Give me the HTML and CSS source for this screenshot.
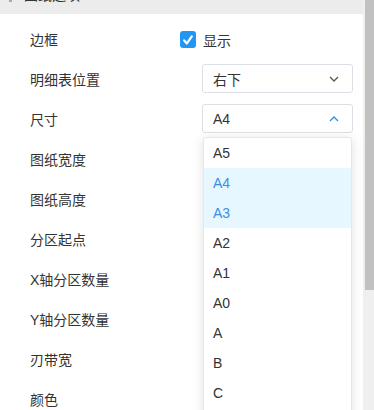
FILE: index.html
```html
<!DOCTYPE html>
<html lang="zh-CN">

<head>
    <meta charset="UTF-8">
    <meta name="viewport" content="width=device-width, initial-scale=1.0">
    <title>图纸选项</title>
    <link rel="stylesheet" href="styles.css">
</head>

<body>

    <div class="page">
        <div class="panel">
            <div class="panel-head">
                <span class="head-icon"></span>
                <span class="head-title">图纸选项</span>
            </div>

            <div class="form">
                <div class="row">
                    <div class="label">边框</div>
                    <label class="check">
                        <span class="check-box">
                            <svg width="12" height="12" viewBox="0 0 12 12">
                                <path d="M2.2 6.4 L4.9 9.4 L9.8 2.4" fill="none" stroke="#fff" stroke-width="2.2" stroke-linecap="round" stroke-linejoin="round" />
                            </svg>
                        </span>
                        显示
                    </label>
                </div>
                <div class="row">
                    <div class="label">明细表位置</div>
                    <div class="select-wrap">
                        <div class="select">
                            <span>右下</span>
                            <svg class="arrow" width="10" height="6" viewBox="0 0 10 6">
                                <path d="M1 1 L5 5 L9 1" fill="none" stroke="#555" stroke-width="1.3" />
                            </svg>
                        </div>
                    </div>
                </div>
                <div class="row">
                    <div class="label">尺寸</div>
                    <div class="select-wrap">
                        <div class="select">
                            <span>A4</span>
                            <svg class="arrow" width="10" height="6" viewBox="0 0 10 6">
                                <path d="M1 5 L5 1 L9 5" fill="none" stroke="#2d8cf0" stroke-width="1.3" />
                            </svg>
                        </div>
                        <ul class="dropdown">
                            <li>A5</li>
                            <li class="active">A4</li>
                            <li class="active">A3</li>
                            <li>A2</li>
                            <li>A1</li>
                            <li>A0</li>
                            <li>A</li>
                            <li>B</li>
                            <li>C</li>
                        </ul>
                    </div>
                </div>
                <div class="row">
                    <div class="label">图纸宽度</div>
                </div>
                <div class="row">
                    <div class="label">图纸高度</div>
                </div>
                <div class="row">
                    <div class="label">分区起点</div>
                </div>
                <div class="row">
                    <div class="label">X轴分区数量</div>
                </div>
                <div class="row">
                    <div class="label">Y轴分区数量</div>
                </div>
                <div class="row">
                    <div class="label">刃带宽</div>
                </div>
                <div class="row">
                    <div class="label">颜色</div>
                </div>
            </div>
        </div>

        <div class="scrollbar">
            <div class="thumb"></div>
        </div>
    </div>

</body>

</html>
```

FILE: styles.css
```css
* {
    margin: 0;
    padding: 0;
    box-sizing: border-box;
}

body {
    font-family: "Liberation Sans", "Noto Sans CJK SC", sans-serif;
    font-size: 14px;
    color: #333;
    background: #fff;
    overflow: hidden;
}

.page {
    display: flex;
    height: 410px;
    overflow: hidden;
}

.panel {
    width: 363px;
    flex-shrink: 0;
}

.panel-head {
    height: 14px;
    background: #ececec;
    overflow: hidden;
    display: flex;
    align-items: flex-end;
    padding-left: 9px;
}

.head-icon {
    width: 3px;
    height: 3px;
    background: #aaa;
    margin-bottom: 12px;
}

.head-title {
    margin-left: 12px;
    line-height: 20px;
    margin-bottom: 9px;
    color: #333;
}

.form {
    padding-top: 5px;
}

.row {
    display: flex;
    align-items: center;
    height: 40px;
}

.label {
    width: 180px;
    padding-left: 30px;
    flex-shrink: 0;
}

.check {
    display: flex;
    align-items: center;
    gap: 7px;
    margin-top: 1px;
}

.check-box {
    width: 16px;
    height: 17px;
    border-radius: 3px;
    background: #2196f3;
    display: flex;
    justify-content: center;
    align-items: center;
}

.select-wrap {
    position: relative;
    margin-left: 22px;
    margin-top: -1px;
}

.select {
    width: 151px;
    height: 29px;
    border: 1px solid #dcdfe6;
    border-radius: 3px;
    display: flex;
    align-items: center;
    justify-content: space-between;
    padding: 0 13px 0 10px;
    background: #fff;
}

.dropdown {
    position: absolute;
    top: 33px;
    left: 1px;
    width: 149px;
    list-style: none;
    background: #fff;
    border: 1px solid #e4e7ed;
    border-radius: 3px;
    box-shadow: 0 2px 12px rgba(0, 0, 0, 0.12);
    padding-bottom: 12px;
}

.dropdown li {
    height: 30px;
    line-height: 30px;
    padding-left: 9px;
    color: #333;
}

.dropdown li.active {
    background: #e6f7ff;
    color: #3a8ee6;
}

.scrollbar {
    width: 11px;
    background: #efefef;
    display: flex;
    justify-content: flex-end;
}

.thumb {
    width: 9px;
    height: 290px;
    background: #c1c1c1;
}
```
